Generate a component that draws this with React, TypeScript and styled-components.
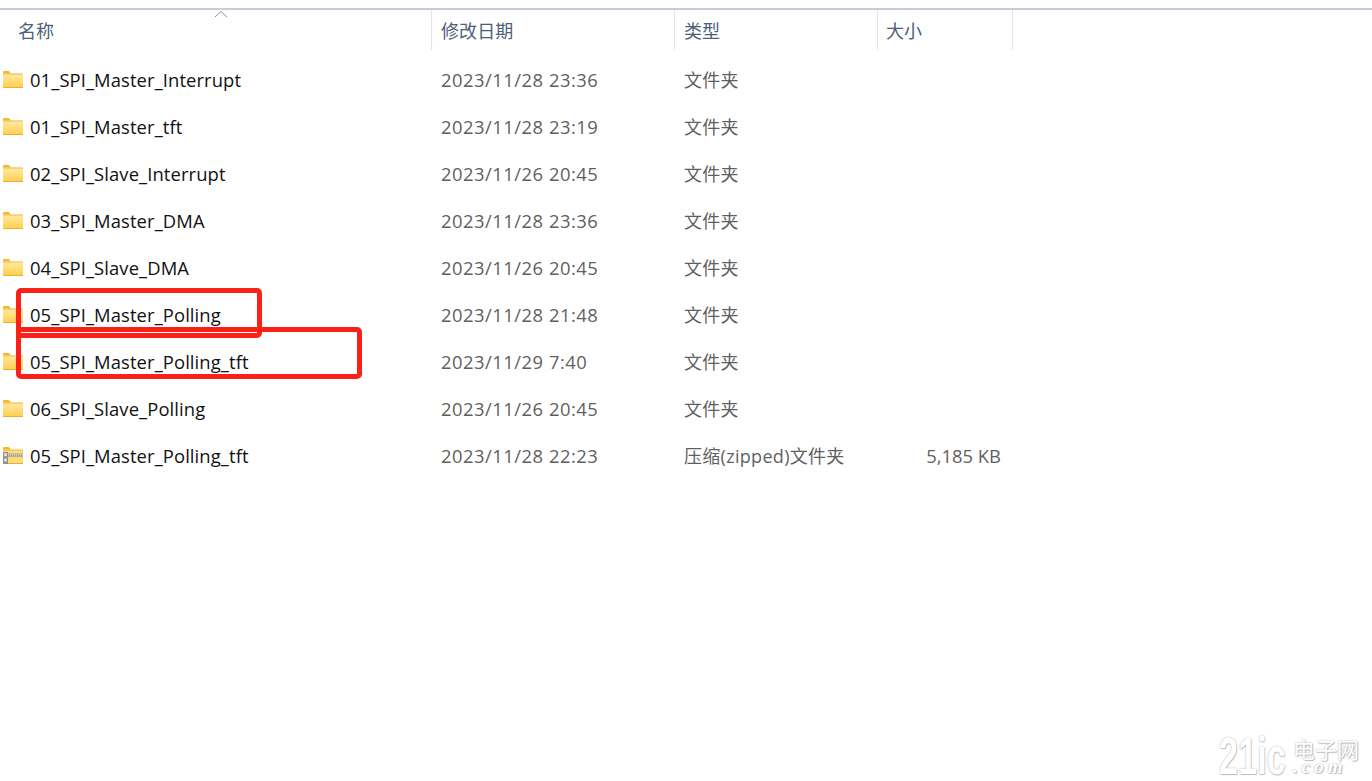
import * as React from "react";
import styled, { createGlobalStyle } from "styled-components";

const GlobalStyle = createGlobalStyle`
  html, body {
    margin: 0;
    padding: 0;
    background: #fff;
  }
`;

const Page = styled.div`
  position: relative;
  width: 1372px;
  height: 781px;
  overflow: hidden;
  background: #fff;
  padding-top: 8px;
  box-sizing: border-box;
  font-family: "Open Sans", "Noto Sans CJK SC", sans-serif;
`;

const columns = "432px 243px 203px 135px";

const Header = styled.div`
  display: grid;
  grid-template-columns: ${columns};
  height: 42px;
  border-top: 2px solid #c6ccd8;
  box-sizing: border-box;
`;

const HeaderCell = styled.div<{ $pad?: number }>`
  position: relative;
  display: flex;
  align-items: center;
  height: 40px;
  padding-left: ${(p) => p.$pad ?? 9}px;
  box-sizing: border-box;
  border-right: 1px solid #e5e5e5;
  font-size: 18px;
  letter-spacing: 0.1px;
  color: #4c607a;
`;

const SortCaret = styled.svg`
  position: absolute;
  left: 214px;
  top: 0;
`;

const List = styled.div`
  margin-top: 6px;
`;

const Row = styled.div`
  display: grid;
  grid-template-columns: ${columns};
  height: 47px;
  align-items: center;
  font-size: 18.4px;
`;

const NameCell = styled.div`
  display: flex;
  align-items: center;
  gap: 7px;
  padding-left: 3px;
  letter-spacing: 0.1px;
  color: #111;
`;

const DateCell = styled.div`
  padding-left: 9px;
  letter-spacing: 0.5px;
  color: #5f5f5f;
`;

const TypeCell = styled.div`
  padding-left: 9px;
  padding-bottom: 2px;
  font-size: 18px;
  letter-spacing: 0.3px;
  color: #5f5f5f;
`;

const SizeCell = styled.div`
  padding-right: 12px;
  text-align: right;
  color: #5f5f5f;
`;

const Highlight = styled.div<{ $left: number; $top: number; $width: number; $height: number }>`
  position: absolute;
  left: ${(p) => p.$left}px;
  top: ${(p) => p.$top}px;
  width: ${(p) => p.$width}px;
  height: ${(p) => p.$height}px;
  box-sizing: border-box;
  border: 5px solid #fb2018;
  border-radius: 5px;
`;

const Watermark = styled.div`
  position: absolute;
  left: 1219px;
  top: 737px;
  display: flex;
  gap: 7px;
  color: #fff;
  text-shadow: 0 0 2px #a8a8a8, 1px 1px 1px #c4c4c4;
`;

const WatermarkBrand = styled.span`
  display: block;
  width: 102px;
  height: 38px;
  margin-right: -35px;
  font-family: "Liberation Sans", sans-serif;
  font-size: 52px;
  font-weight: 700;
  line-height: 38px;
  white-space: nowrap;
  transform: scaleX(0.66);
  transform-origin: left center;
`;

const WatermarkSide = styled.div`
  display: flex;
  flex-direction: column;
  width: 68px;
`;

const WatermarkCn = styled.span`
  font-family: "Noto Sans CJK SC", sans-serif;
  font-size: 22px;
  line-height: 22px;
  white-space: nowrap;
`;

const WatermarkDomain = styled.span`
  font-family: "Liberation Serif", serif;
  font-size: 19px;
  font-style: italic;
  font-weight: 700;
  line-height: 16px;
  letter-spacing: 4px;
  white-space: nowrap;
`;

const FolderIcon = () => (
  <svg width="20" height="17" viewBox="0 0 20 17">
    <defs>
      <linearGradient id="folderFill" x1="0" y1="0" x2="0" y2="1">
        <stop offset="0" stopColor="#ffe9a0" />
        <stop offset="1" stopColor="#ffd052" />
      </linearGradient>
    </defs>
    <path d="M0 1.2C0 .5.5 0 1.2 0h4.6l2.2 2.4H0z" fill="#f8b822" />
    <rect x="0" y="2.4" width="20" height="14.6" rx="0.6" fill="#eeb02c" />
    <rect x="0" y="3.4" width="20" height="12.6" fill="url(#folderFill)" />
  </svg>
);

const ZipIcon = () => (
  <svg width="20" height="17" viewBox="0 0 20 17">
    <path d="M0 1.2C0 .5.5 0 1.2 0h4.6l2.2 2.4H0z" fill="#f8b822" />
    <rect x="0" y="2.4" width="20" height="14.6" rx="0.6" fill="#eeb02c" />
    <rect x="0" y="3.4" width="20" height="12.6" fill="#ffdc78" />
    <rect x="5" y="6.5" width="15" height="3.6" fill="#a8a492" />
    <path d="M5 7.5h15M5 9h15" stroke="#e8e4d0" strokeWidth="0.8" strokeDasharray="1 1" />
    <rect x="0" y="5" width="5" height="12" fill="#8f9294" />
    <rect x="1.2" y="6.2" width="2.6" height="3" fill="#e6e6e6" />
    <rect x="1.2" y="11.5" width="2.6" height="3" fill="#e6e6e6" />
  </svg>
);

const files = [
  { name: "01_SPI_Master_Interrupt", date: "2023/11/28 23:36", type: "文件夹" },
  { name: "01_SPI_Master_tft", date: "2023/11/28 23:19", type: "文件夹" },
  { name: "02_SPI_Slave_Interrupt", date: "2023/11/26 20:45", type: "文件夹" },
  { name: "03_SPI_Master_DMA", date: "2023/11/28 23:36", type: "文件夹" },
  { name: "04_SPI_Slave_DMA", date: "2023/11/26 20:45", type: "文件夹" },
  { name: "05_SPI_Master_Polling", date: "2023/11/28 21:48", type: "文件夹" },
  { name: "05_SPI_Master_Polling_tft", date: "2023/11/29 7:40", type: "文件夹" },
  { name: "06_SPI_Slave_Polling", date: "2023/11/26 20:45", type: "文件夹" },
  { name: "05_SPI_Master_Polling_tft", date: "2023/11/28 22:23", type: "压缩(zipped)文件夹", size: "5,185 KB", zip: true },
];

const App = () => (
  <Page>
    <GlobalStyle />
    <Header>
      <HeaderCell $pad={18}>
        名称
        <SortCaret width="14" height="8" viewBox="0 0 14 8">
          <path d="M1 7l6-5.5L13 7" fill="none" stroke="#8a8f96" strokeWidth="1" />
        </SortCaret>
      </HeaderCell>
      <HeaderCell>修改日期</HeaderCell>
      <HeaderCell>类型</HeaderCell>
      <HeaderCell $pad={8}>大小</HeaderCell>
    </Header>
    <List>
      {files.map((f, i) => (
        <Row key={i}>
          <NameCell>
            {f.zip ? <ZipIcon /> : <FolderIcon />}
            {f.name}
          </NameCell>
          <DateCell>{f.date}</DateCell>
          <TypeCell>{f.type}</TypeCell>
          <SizeCell>{f.size}</SizeCell>
        </Row>
      ))}
    </List>
    <Highlight $left={16} $top={288} $width={246} $height={50} />
    <Highlight $left={16} $top={327} $width={346} $height={52} />
    <Watermark>
      <WatermarkBrand>21ic</WatermarkBrand>
      <WatermarkSide>
        <WatermarkCn>电子网</WatermarkCn>
        <WatermarkDomain>.com</WatermarkDomain>
      </WatermarkSide>
    </Watermark>
  </Page>
);

export default App;
